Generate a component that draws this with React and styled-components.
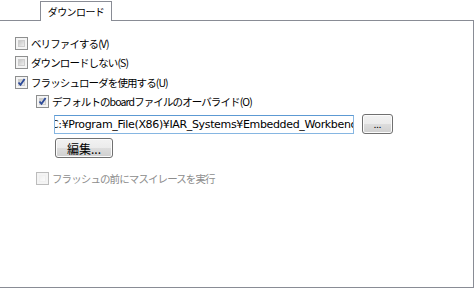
import styled, { createGlobalStyle } from 'styled-components';

const GlobalStyle = createGlobalStyle`
  html, body {
    margin: 0;
    padding: 0;
    background: #fff;
  }
  body {
    font-family: "Noto Sans CJK JP", "Liberation Sans", sans-serif;
    font-size: 10px;
    color: #000;
  }
`;

const Frame = styled.div`
  width: 474px;
  height: 288px;
  overflow: hidden;
  background: #fff;
`;

const TabBar = styled.div`
  display: flex;
  padding-left: 40px;
  height: 20px;
`;

const Tab = styled.div`
  position: relative;
  z-index: 1;
  box-sizing: border-box;
  width: 72px;
  height: 20px;
  margin-top: 1px;
  border: 1px solid #898c95;
  border-bottom: none;
  background: #fff;
  display: flex;
  align-items: center;
  justify-content: center;
  letter-spacing: -0.6px;
`;

const Panel = styled.div`
  box-sizing: border-box;
  width: 474px;
  height: 268px;
  border: 1px solid #898c95;
  border-left: none;
  padding-top: 13px;
  display: flex;
  flex-direction: column;
`;

const Row = styled.label`
  display: flex;
  align-items: center;
  gap: 3px;
  height: 19px;
  padding-left: ${(p) => p.$indent}px;
  margin-top: ${(p) => p.$top || 0}px;
  color: ${(p) => (p.$disabled ? '#8d8d8d' : '#000')};
  font-size: 10.5px;
  letter-spacing: -0.9px;
  white-space: nowrap;
`;

const Box = styled.span`
  box-sizing: border-box;
  width: 13px;
  height: 13px;
  flex: none;
  border: 1px solid ${(p) => (p.$disabled ? '#bcbcbc' : '#8e8f8f')};
  background: #f4f4f4;
  padding: 2px;
  display: flex;
`;

const Inner = styled.span`
  flex: 1;
  background: ${(p) =>
    p.$disabled
      ? 'linear-gradient(135deg, #f0f0f0, #fbfbfb)'
      : 'linear-gradient(135deg, #c6c6c6, #eeeeee)'};
  border: 1px solid ${(p) => (p.$disabled ? '#f0f0f0' : '#cdcdcd')};
  display: flex;
  align-items: center;
  justify-content: center;
`;

const CheckMark = () => (
  <svg width="9" height="9" viewBox="0 0 9 9" style={{ margin: '-2px' }}>
    <path d="M1.5 4.5 L3.5 6.8 L7.6 1" fill="none" stroke="#2c4a99" strokeWidth="1.8" />
  </svg>
);

const Checkbox = ({ checked, disabled }) => (
  <Box $disabled={disabled}>
    <Inner $disabled={disabled}>{checked && <CheckMark />}</Inner>
  </Box>
);

const PathRow = styled.div`
  display: flex;
  align-items: center;
  gap: 8px;
  padding-left: 54px;
  margin-top: 3px;
  height: 20px;
`;

const PathInput = styled.div`
  box-sizing: border-box;
  width: 300px;
  height: 19px;
  border: 1px solid #86b6e2;
  border-top-color: #5d9ad3;
  overflow: hidden;
  white-space: nowrap;
  font-family: "DejaVu Sans", "Noto Sans CJK JP", sans-serif;
  font-size: 11px;
  letter-spacing: -0.35px;
  line-height: 17px;
  text-indent: -4px;
`;

const Button = styled.button`
  box-sizing: border-box;
  width: ${(p) => p.$w}px;
  height: 20px;
  padding: 0;
  border: 1px solid #707070;
  border-radius: 3px;
  background: linear-gradient(#f2f2f2 0%, #ebebeb 50%, #dddddd 51%, #cfcfcf 100%);
  box-shadow: inset 0 0 0 1px #fcfcfc;
  font-family: "Noto Sans CJK JP", sans-serif;
  font-size: ${(p) => p.$fs || 12}px;
  color: #000;
  display: flex;
  align-items: center;
  justify-content: center;
`;

const EditRow = styled.div`
  display: flex;
  padding-left: 55px;
  margin-top: 4px;
`;

export default function App() {
  return (
    <Frame>
      <GlobalStyle />
      <TabBar>
        <Tab>ダウンロード</Tab>
      </TabBar>
      <Panel>
        <Row $indent={15}>
          <Checkbox />
          ベリファイする(V)
        </Row>
        <Row $indent={15}>
          <Checkbox />
          ダウンロードしない(S)
        </Row>
        <Row $indent={15} $top={1}>
          <Checkbox checked />
          フラッシュローダを使用する(U)
        </Row>
        <Row $indent={36}>
          <Checkbox checked />
          デフォルトのboardファイルのオーバライド(O)
        </Row>
        <PathRow>
          <PathInput>C:¥Program_File(X86)¥IAR_Systems¥Embedded_Workbench</PathInput>
          <Button $w={31} $fs={9}>...</Button>
        </PathRow>
        <EditRow>
          <Button $w={58}>編集...</Button>
        </EditRow>
        <Row $indent={36} $top={11} $disabled>
          <Checkbox disabled />
          フラッシュの前にマスイレースを実行
        </Row>
      </Panel>
    </Frame>
  );
}
